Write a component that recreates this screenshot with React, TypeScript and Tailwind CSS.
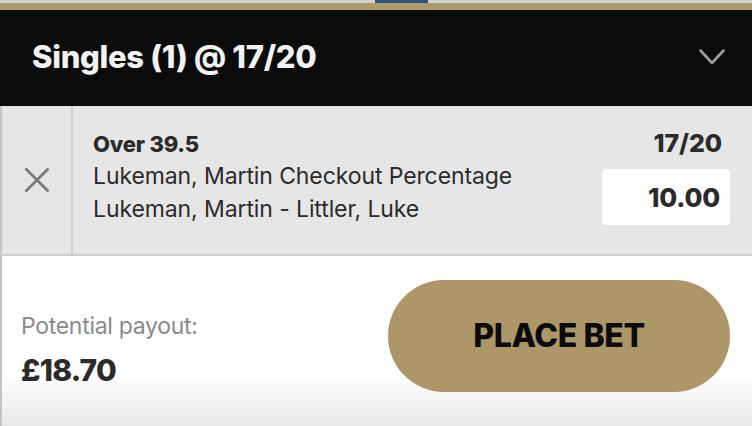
const inter = "font-['Inter','Noto_Sans',sans-serif]";

export default function App() {
  return (
    <div className={`${inter} w-[752px] h-[426px] overflow-hidden bg-white flex flex-col`}>
      {/* top strips */}
      <div className="h-[3px] bg-[#d2d2d2] flex">
        <div className="ml-[375px] w-[53px] bg-[#2c4f7c]" />
      </div>
      <div className="h-[7px] bg-[#ae9a6a]" />

      {/* header */}
      <div className="h-[96px] bg-[#0b0b0b] flex items-center justify-between pl-8 pr-[27px]">
        <span className="text-[#f2f2f2] font-extrabold text-[31px] tracking-[-0.3px] pb-[2px]">
          Singles (1) @ 17/20
        </span>
        <svg width="26" height="16" viewBox="0 0 26 16" fill="none" className="mb-[2px]">
          <polyline points="1.5,1.5 13,14 24.5,1.5" stroke="#9d9d9d" strokeWidth="2.6" strokeLinecap="round" strokeLinejoin="round" />
        </svg>
      </div>

      {/* selection row */}
      <div className="h-[150px] bg-[#e6e6e6] flex border-b-2 border-[#cfcfcf]">
        <div className="w-[73px] border-l-2 border-[#c4c4c4] border-r-2 border-r-[#d0d0d0] flex items-center justify-center">
          <svg width="26" height="26" viewBox="0 0 26 26" fill="none">
            <path d="M1.5 1.5 24.5 24.5M24.5 1.5 1.5 24.5" stroke="#7b7b7b" strokeWidth="2.8" />
          </svg>
        </div>
        <div className="flex-1 pl-[20px] pt-[22px] text-[#2b2b2b]">
          <div className="font-extrabold text-[22px] leading-[32px] tracking-[-0.2px]">Over 39.5</div>
          <div className="text-[23px] leading-[33px] tracking-[-0.1px]">Lukeman, Martin Checkout Percentage</div>
          <div className="text-[23px] leading-[33px] tracking-[-0.1px]">Lukeman, Martin - Littler, Luke</div>
        </div>
        <div className="flex flex-col items-end pr-[22px] pt-[20px]">
          <div className="font-extrabold text-[25px] text-[#2b2b2b] leading-[34px] pr-[8px] tracking-[-0.1px]">17/20</div>
          <div className="mt-[9px] w-[128px] h-[56px] bg-white rounded-[4px] flex items-center justify-end pr-[10px]">
            <span className="font-extrabold text-[26px] text-[#2b2b2b] tracking-[-0.2px]">10.00</span>
          </div>
        </div>
      </div>

      {/* footer */}
      <div className="flex-1 flex items-center justify-between pl-[19px] pr-[22px] bg-gradient-to-b from-white from-70% to-[#e9e9e9] border-l-2 border-[#c4c4c4]">
        <div className="flex flex-col mt-[20px]">
          <span className="text-[#8a8a8a] text-[23px] leading-[28px] tracking-[-0.3px]">Potential payout:</span>
          <span className="text-[#2b2b2b] font-extrabold text-[30px] leading-[40px] mt-[10px] tracking-[-0.8px]">£18.70</span>
        </div>
        <button className="w-[342px] h-[112px] rounded-full bg-[#ad9768] flex items-center justify-center -mt-[10px]">
          <span className="font-extrabold text-[32px] text-[#0b0b0b] tracking-[-0.4px]">PLACE BET</span>
        </button>
      </div>
    </div>
  );
}
